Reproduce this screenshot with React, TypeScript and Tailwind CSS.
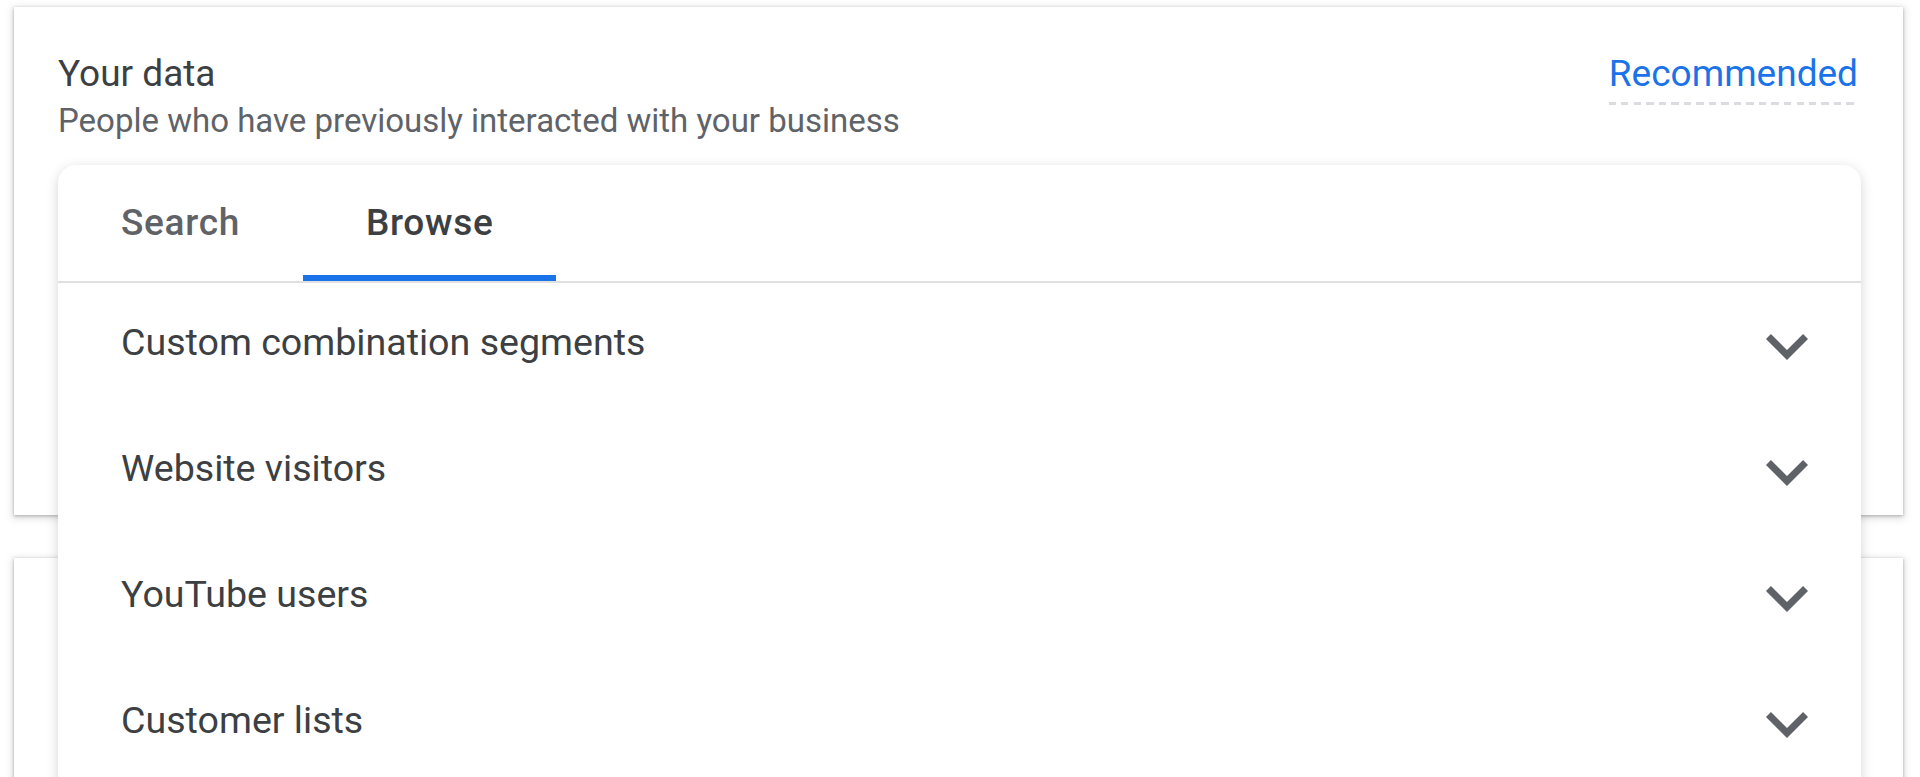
const font = { fontFamily: "Roboto, 'Noto Sans', sans-serif" };

const rows = [
  "Custom combination segments",
  "Website visitors",
  "YouTube users",
  "Customer lists",
];

function ExpandMore() {
  return (
    <svg viewBox="0 0 24 24" className="h-[84px] w-[84px] fill-[#5f6368]">
      <path d="M16.59 8.59 12 13.17 7.41 8.59 6 10l6 6 6-6z" />
    </svg>
  );
}

function Tab({ label, active }: { label: string; active?: boolean }) {
  return (
    <div
      className={`flex h-[116px] items-center border-b-[6px] px-[63px] pt-[6px] text-[37px] font-medium tracking-[0.7px] ${
        active ? "border-[#1a73e8] text-[#3c4043]" : "border-transparent text-[#5f6368]"
      }`}
    >
      {label}
    </div>
  );
}

export default function App() {
  return (
    <div className="relative h-[777px] overflow-hidden bg-white" style={font}>
      <div className="pt-[7px]">
        <section className="ml-[14px] mr-[17px] h-[508px] bg-white px-[44px] pt-[45px] shadow-[0_1px_3px_rgba(60,64,67,0.35),0_2px_7px_2px_rgba(60,64,67,0.15)]">
          <div className="flex items-start justify-between">
            <div>
              <h2 className="text-[37px] leading-[44px] font-normal text-[#3c4043]">Your data</h2>
              <p className="mt-[5px] text-[33px] leading-[40px] text-[#5f6368]">
                People who have previously interacted with your business
              </p>
            </div>
            <div className="mr-[1px]">
              <div className="text-[37px] leading-[44px] text-[#1a73e8]">Recommended</div>
              <div className="mt-[6px] h-[3px] bg-[repeating-linear-gradient(90deg,#dadce0_0_7px,transparent_7px_12.5px)]" />
            </div>
          </div>
        </section>

        <section className="mt-[43px] ml-[14px] mr-[17px] h-[300px] bg-white shadow-[0_1px_3px_rgba(60,64,67,0.35),0_2px_7px_2px_rgba(60,64,67,0.15)]" />
      </div>

      <div className="absolute top-[165px] left-[58px] z-10 w-[1803px] rounded-t-[18px] bg-white shadow-[0_3px_12px_rgba(60,64,67,0.22)]">
        <div className="flex border-b-2 border-[#e0e0e0]">
          <Tab label="Search" />
          <Tab label="Browse" active />
        </div>
        {rows.map((r) => (
          <div key={r} className="flex h-[126px] items-center justify-between pr-[32px] pl-[63px]">
            <span className="pb-[7px] text-[37.6px] text-[#3c4043]">{r}</span>
            <ExpandMore />
          </div>
        ))}
      </div>
    </div>
  );
}
